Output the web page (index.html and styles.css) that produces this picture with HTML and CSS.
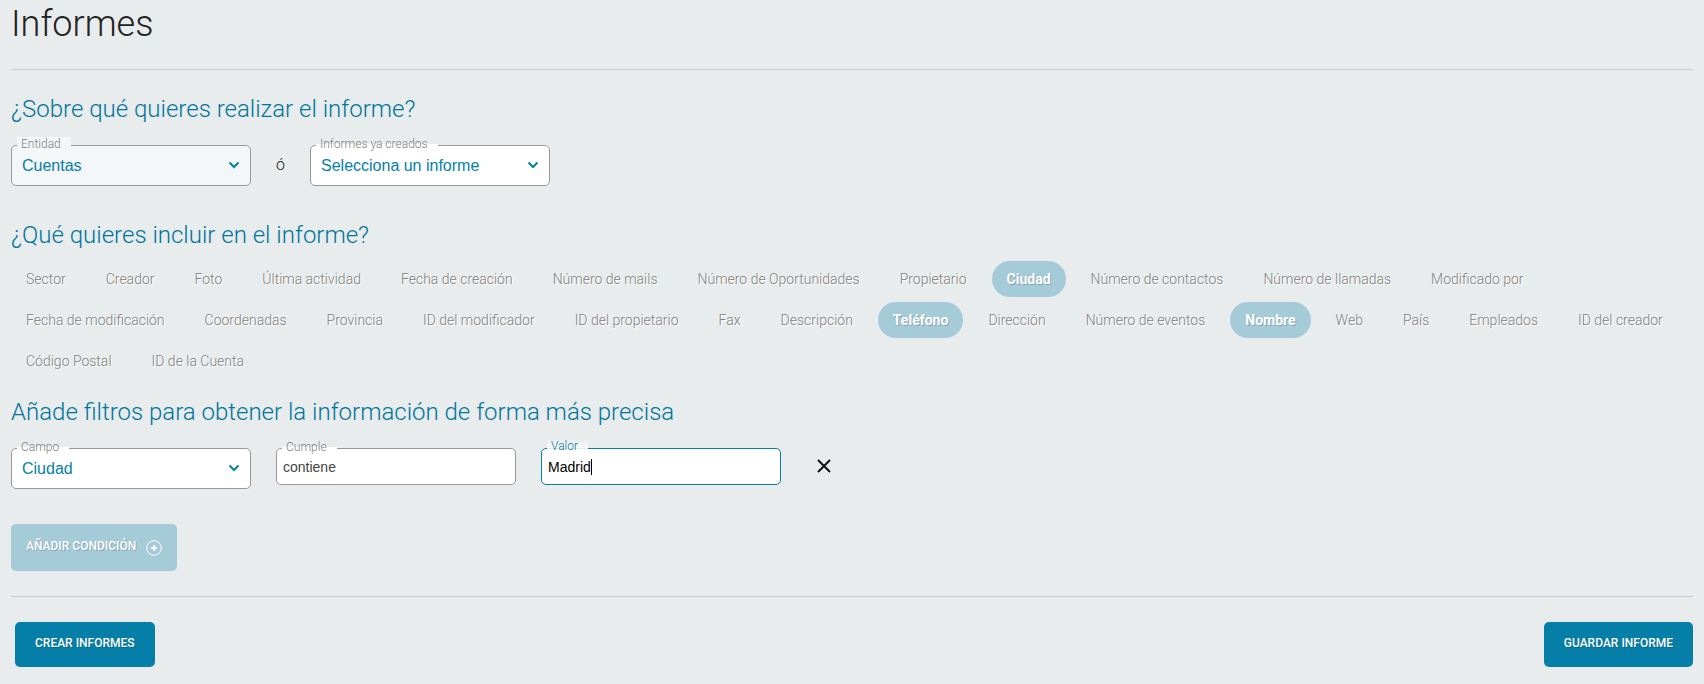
FILE: index.html
```html
<!DOCTYPE html>
<html lang="es">

<head>
    <meta charset="UTF-8">
    <meta name="viewport" content="width=device-width, initial-scale=1.0">
    <title>Informes</title>
    <link rel="stylesheet" href="styles.css">
</head>

<body>
    <header class="page-header">
        <h1>Informes</h1>
    </header>
    <main>
        <section class="source">
            <h2>¿Sobre qué quieres realizar el informe?</h2>
            <div class="fields">
                <div class="field field-select field-filled">
                    <label for="entity">Entidad</label>
                    <select id="entity">
                        <option>Cuentas</option>
                    </select>
                    <svg class="chevron" viewBox="0 0 12 8"><path d="M1.500 1.500 6 6l4.500-4.500"/></svg>
                </div>
                <span class="or">ó</span>
                <div class="field field-select">
                    <label for="report">Informes ya creados</label>
                    <select id="report">
                        <option>Selecciona un informe</option>
                    </select>
                    <svg class="chevron" viewBox="0 0 12 8"><path d="M1.500 1.500 6 6l4.500-4.500"/></svg>
                </div>
            </div>
        </section>

        <section class="columns">
            <h2>¿Qué quieres incluir en el informe?</h2>
            <div class="chips">
                <button type="button" class="chip">Sector</button>
                <button type="button" class="chip">Creador</button>
                <button type="button" class="chip">Foto</button>
                <button type="button" class="chip">Última actividad</button>
                <button type="button" class="chip">Fecha de creación</button>
                <button type="button" class="chip">Número de mails</button>
                <button type="button" class="chip">Número de Oportunidades</button>
                <button type="button" class="chip">Propietario</button>
                <button type="button" class="chip active">Ciudad</button>
                <button type="button" class="chip">Número de contactos</button>
                <button type="button" class="chip">Número de llamadas</button>
                <button type="button" class="chip">Modificado por</button>
                <button type="button" class="chip">Fecha de modificación</button>
                <button type="button" class="chip">Coordenadas</button>
                <button type="button" class="chip">Provincia</button>
                <button type="button" class="chip">ID del modificador</button>
                <button type="button" class="chip">ID del propietario</button>
                <button type="button" class="chip">Fax</button>
                <button type="button" class="chip">Descripción</button>
                <button type="button" class="chip active">Teléfono</button>
                <button type="button" class="chip">Dirección</button>
                <button type="button" class="chip">Número de eventos</button>
                <button type="button" class="chip active">Nombre</button>
                <button type="button" class="chip">Web</button>
                <button type="button" class="chip">País</button>
                <button type="button" class="chip">Empleados</button>
                <button type="button" class="chip">ID del creador</button>
                <button type="button" class="chip">Código Postal</button>
                <button type="button" class="chip">ID de la Cuenta</button>
            </div>
        </section>

        <section class="filters">
            <h2>Añade filtros para obtener la información de forma más precisa</h2>
            <div class="fields filter-row">
                <div class="field field-select">
                    <label for="filter-field">Campo</label>
                    <select id="filter-field">
                        <option>Ciudad</option>
                    </select>
                    <svg class="chevron" viewBox="0 0 12 8"><path d="M1.500 1.500 6 6l4.500-4.500"/></svg>
                </div>
                <div class="field">
                    <label for="filter-operator">Cumple</label>
                    <input type="text" id="filter-operator" value="contiene">
                </div>
                <div class="field field-focus">
                    <label for="filter-value">Valor</label>
                    <input type="text" id="filter-value" value="Madrid">
                    <span class="caret"></span>
                </div>
                <button type="button" class="remove-btn" aria-label="Eliminar condición">
                    <svg viewBox="0 0 14 14"><path d="M1 1 13 13M13 1 1 13"/></svg>
                </button>
            </div>
            <button type="button" class="btn btn-light">
                <span>Añadir condición</span>
                <svg viewBox="0 0 16 16"><circle cx="8" cy="8" r="7.300"/><path class="plus" d="M8 5v6M5 8h6"/></svg>
            </button>
        </section>
    </main>
    <footer class="actions">
        <button type="button" class="btn">Crear informes</button>
        <button type="button" class="btn">Guardar informe</button>
    </footer>
</body>

</html>
```
FILE: styles.css
```css
* {
    margin: 0;
    padding: 0;
    box-sizing: border-box;
}

body {
    font-family: 'Roboto', sans-serif;
    font-weight: 300;
    font-size: 14px;
    background: #e8ecec;
    color: #222222;
    padding: 0 11px 16px;
}

.page-header {
    height: 70px;
    border-bottom: 1px solid #c8cccc;
}

h1 {
    font-size: 36px;
    font-weight: 300;
    line-height: 48px;
}

h2 {
    font-size: 24px;
    font-weight: 300;
    line-height: 32px;
    color: #00759e;
}

.source {
    padding-top: 23px;
}

.fields {
    display: flex;
    align-items: flex-start;
    margin-top: 20px;
}

.field {
    position: relative;
    width: 240px;
}

.field label {
    position: absolute;
    top: -8px;
    left: 6px;
    padding: 0 10px 0 4px;
    font-size: 12px;
    line-height: 14px;
    height: 10px;
    color: #808080;
    background: linear-gradient(transparent 70%, #ffffff 70%);
}

.field select,
.field input {
    display: block;
    width: 100%;
    border: 1px solid #999999;
    border-radius: 5px;
    background: #ffffff;
    font-family: 'Liberation Sans', Arial, sans-serif;
    outline: none;
}

.field select {
    height: 41px;
    padding: 0 32px 0 10px;
    font-size: 16px;
    color: #057fa8;
    appearance: none;
}

.field input {
    height: 37px;
    padding: 0 6px;
    font-size: 14px;
    color: #444444;
}

.field-filled select {
    background: #f3f7f8;
}

.field-filled label {
    background: #f3f7f8;
}

.field-focus input {
    border-color: #057fa8;
    color: #000000;
}

.field-focus label {
    top: -9px;
    height: 11px;
    color: #00759e;
    background: linear-gradient(transparent, #ffffff);
}

.caret {
    position: absolute;
    top: 11px;
    left: 50px;
    width: 1px;
    height: 16px;
    background: #000000;
}

.chevron {
    position: absolute;
    top: 16px;
    right: 11px;
    width: 12px;
    height: 8px;
    fill: none;
    stroke: #057fa8;
    stroke-width: 2;
    pointer-events: none;
}

.or {
    width: 59px;
    line-height: 40px;
    text-align: center;
    font-size: 16px;
}

.columns {
    padding-top: 33px;
}

.chips {
    display: flex;
    flex-wrap: wrap;
    gap: 5px 10px;
    margin-top: 10px;
}

.chip {
    height: 36px;
    padding: 0 15px;
    border: none;
    border-radius: 18px;
    background: none;
    font: inherit;
    color: #808080;
    text-shadow: 1px 1px 0 #ffffff;
    cursor: pointer;
}

.chip.active {
    background: #a5cad8;
    color: #ffffff;
    font-weight: 700;
    text-shadow: 1px 1px 0 rgba(0, 0, 0, 0.2);
}

.filters {
    padding-top: 17px;
    padding-bottom: 25px;
    border-bottom: 1px solid #c8cccc;
}

.filter-row {
    gap: 25px;
}

.remove-btn {
    width: 36px;
    height: 36px;
    border: none;
    background: none;
    cursor: pointer;
}

.remove-btn svg {
    display: block;
    width: 14px;
    height: 14px;
    margin: auto;
    stroke: #111111;
    stroke-width: 2;
}

.btn {
    display: flex;
    align-items: center;
    gap: 10px;
    height: 45px;
    padding: 0 20px 4px;
    border: none;
    border-radius: 5px;
    background: #057fa8;
    font-family: inherit;
    font-size: 12px;
    font-weight: 500;
    text-transform: uppercase;
    color: #ffffff;
    text-shadow: 1px 1px 0 rgba(0, 0, 0, 0.2);
    cursor: pointer;
}

.btn-light {
    height: 47px;
    margin-top: 35px;
    padding: 0 15px 4px;
    background: #a5cad8;
}

.btn svg {
    width: 16px;
    height: 16px;
    margin-top: 5px;
    fill: none;
    stroke: #ffffff;
    stroke-width: 1;
}

.btn .plus {
    stroke-width: 2;
}

.actions {
    display: flex;
    justify-content: space-between;
    padding: 25px 0 0 4px;
}
```
